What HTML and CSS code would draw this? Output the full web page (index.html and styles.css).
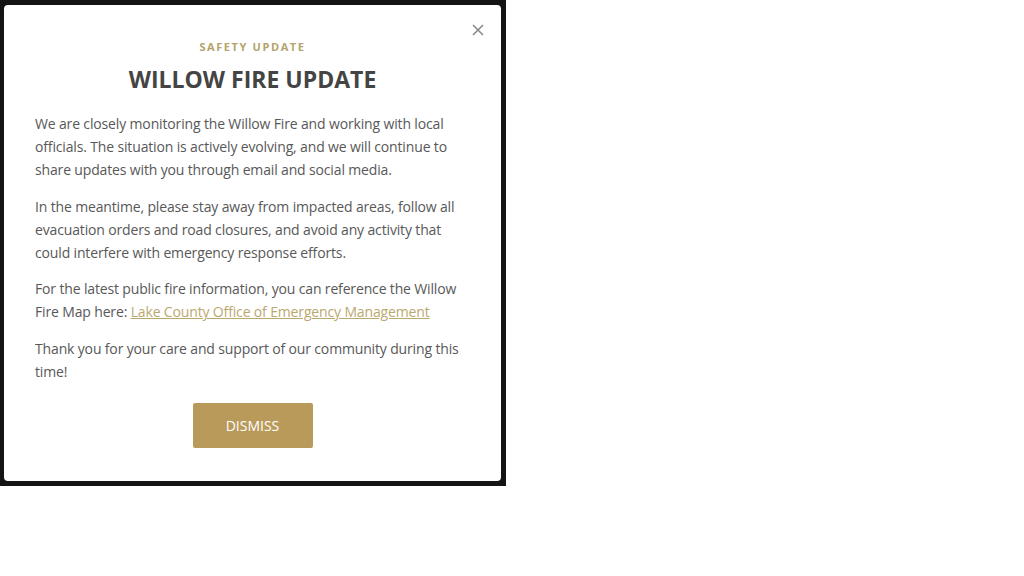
FILE: index.html
```html
<!DOCTYPE html>
<html lang="en">
<head>
    <meta charset="UTF-8">
    <meta name="viewport" content="width=device-width, initial-scale=1.0">
    <title>Willow Fire Update</title>
    <link rel="stylesheet" href="styles.css">
</head>
<body>
    <div class="backdrop">
        <div class="modal">
            <button class="modal-close" type="button" aria-label="Close">
                <svg width="12" height="12" viewBox="0 0 12 12">
                    <path d="M1 1 L11 11 M11 1 L1 11" stroke="#8a8a8a" stroke-width="1.6" fill="none"/>
                </svg>
            </button>
            <p class="eyebrow">Safety Update</p>
            <h1 class="modal-title">WILLOW FIRE UPDATE</h1>
            <div class="modal-body">
                <p>We are closely monitoring the Willow Fire and working with local officials. The situation is actively evolving, and we will continue to share updates with you through email and social media.</p>
                <p>In the meantime, please stay away from impacted areas, follow all evacuation orders and road closures, and avoid any activity that could interfere with emergency response efforts.</p>
                <p>For the latest public fire information, you can reference the Willow Fire Map here: <a href="#">Lake County Office of Emergency Management</a></p>
                <p>Thank you for your care and support of our community during this time!</p>
            </div>
            <div class="modal-actions">
                <button class="btn-dismiss" type="button">DISMISS</button>
            </div>
        </div>
    </div>
</body>
</html>
```

FILE: styles.css
```css
body {
    margin: 0;
    background: #fff;
    font-family: 'Open Sans', 'Noto Sans', sans-serif;
}

.backdrop {
    width: 506px;
    height: 486px;
    box-sizing: border-box;
    padding: 5px 5px 5px 4px;
    background: #141414;
}

.modal {
    position: relative;
    height: 100%;
    box-sizing: border-box;
    background: #fff;
    border-radius: 4px;
    padding: 34px 31px 0 31px;
    text-align: center;
}

.modal-close {
    position: absolute;
    top: 19px;
    right: 17px;
    padding: 0;
    border: 0;
    background: none;
    line-height: 0;
    cursor: pointer;
}

.eyebrow {
    margin: 0;
    font-size: 11px;
    font-weight: 700;
    letter-spacing: 1.6px;
    text-transform: uppercase;
    color: #b4a36c;
    line-height: 16px;
}

.modal-title {
    margin: 9px 0 18px;
    font-size: 23px;
    font-weight: 700;
    color: #444;
    line-height: 30px;
}

.modal-body {
    text-align: left;
    color: #585858;
    font-size: 14px;
    line-height: 23px;
    letter-spacing: -0.15px;
}

.modal-body p {
    margin: 0 0 13.5px;
}

.modal-body a {
    color: #bba86f;
}

.modal-actions {
    padding-top: 7px;
}

.btn-dismiss {
    width: 120px;
    height: 45px;
    border: 0;
    border-radius: 2px;
    background: #b99a5b;
    color: #fff;
    font-family: inherit;
    font-size: 14px;
}
```
